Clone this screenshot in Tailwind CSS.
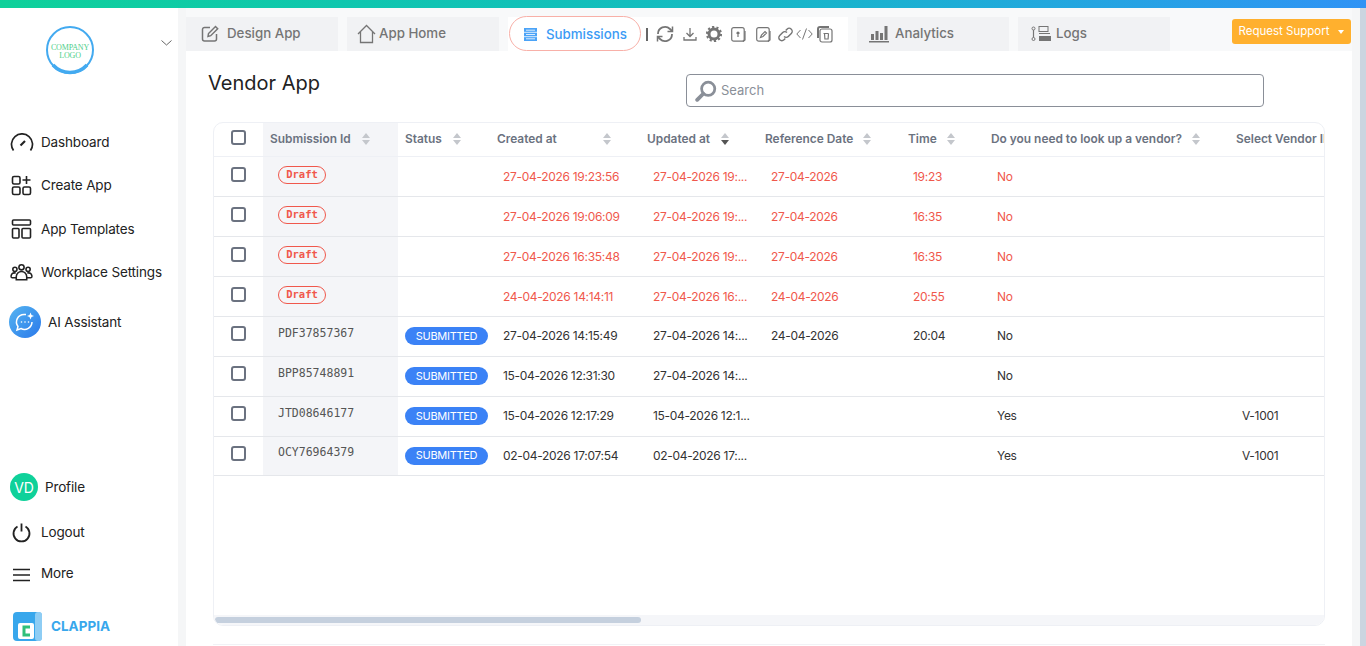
<!DOCTYPE html>
<html lang="en">
<head>
    <meta charset="UTF-8">
    <title>Vendor App</title>
    <script src="https://cdn.jsdelivr.net/npm/@tailwindcss/browser@4"></script>
</head>
<body class="h-[646px] w-[1366px] overflow-hidden bg-[#f5f6f7] font-['Inter',sans-serif] text-[#222]">
    <!-- Top gradient -->
    <div class="h-2 bg-gradient-to-r from-[#0fd19a] via-[#14bcc0] to-[#3093f5]"></div>

    <div class="flex h-[638px]">
        <!-- Sidebar -->
        <aside class="flex h-full w-[178px] shrink-0 flex-col bg-white text-[13.5px] tracking-[-0.15px]">
            <div class="relative h-[112px]">
                <svg class="absolute left-[45px] top-[17px]" width="50" height="50" viewBox="0 0 50 50">
                    <circle cx="25" cy="25" r="23" fill="none" stroke="#43aaf0" stroke-width="2"/>
                    <path d="M8 40a23 23 0 0 0 34 0" fill="none" stroke="#43aaf0" stroke-width="3.500"/>
                    <text x="25" y="25" text-anchor="middle" font-family="Liberation Serif" font-size="8" fill="#4fcf8c">COMPANY</text>
                    <text x="25" y="33" text-anchor="middle" font-family="Liberation Serif" font-size="8" fill="#4fcf8c">LOGO</text>
                </svg>
                <svg class="absolute left-[161px] top-[32px]" width="11" height="6" viewBox="0 0 11 6" fill="none" stroke="#666" stroke-width="1"><path d="M.5.5 5.500 5 10.500.5"/></svg>
            </div>
            <div class="flex h-[44px] items-center gap-[7px] pl-[10px]">
                <svg width="24" height="19" viewBox="0 0 24 19" fill="none" stroke="#222" stroke-width="1.700"><path d="M3.500 17.500a10.500 10.500 0 1 1 17 0"/><path d="M10.500 12.500 15 8" stroke-width="2.200"/></svg>
                <span>Dashboard</span>
            </div>
            <div class="flex h-[43px] items-center gap-[9px] pl-[11px]">
                <svg width="21" height="21" viewBox="0 0 21 21" fill="none" stroke="#222" stroke-width="1.600"><rect x="1.500" y="1.500" width="7.500" height="7.500" rx="1.500"/><rect x="1.500" y="12" width="7.500" height="7.500" rx="1.500"/><rect x="12" y="12" width="7.500" height="7.500" rx="1.500"/><path d="M15.500 1v8M11.500 5h8"/></svg>
                <span>Create App</span>
            </div>
            <div class="flex h-[44px] items-center gap-[9px] pl-[11px]">
                <svg width="21" height="20" viewBox="0 0 21 20" fill="none" stroke="#222" stroke-width="1.600"><rect x="1.500" y="1" width="18" height="5" rx="1"/><rect x="1.500" y="9.500" width="6.500" height="9.500" rx="1"/><rect x="11" y="9.500" width="8.500" height="9.500" rx="1"/></svg>
                <span>App Templates</span>
            </div>
            <div class="flex h-[43px] items-center gap-[8px] pl-[10px]">
                <svg width="23" height="19" viewBox="0 0 22 18" fill="none" stroke="#222" stroke-width="1.500"><circle cx="11" cy="4" r="2.500"/><circle cx="4.700" cy="6" r="2"/><circle cx="17.300" cy="6" r="2"/><path d="M6 16v-3a5 5 0 0 1 10 0v3zM6 14H2a1.200 1.200 0 0 1-1-1.500C1.500 10 3 9 5.500 9.500M16 14h4a1.200 1.200 0 0 0 1-1.500C20.500 10 19 9 16.500 9.500"/></svg>
                <span>Workplace Settings</span>
            </div>
            <div class="mt-[4px] flex h-[48px] items-center gap-[6px] pl-[9px]">
                <div class="flex h-8 w-8 items-center justify-center rounded-full bg-gradient-to-br from-[#56b4f0] to-[#2c78ea]">
                    <svg width="22" height="22" viewBox="0 0 22 22" fill="none" stroke="#fff" stroke-width="1.500"><path d="M12 3.500H10a7.500 7.500 0 0 0-6 12L3 19l4-1.500a7.500 7.500 0 0 0 11-6.500"/><path d="M16.500 1.500l1 2.500 2.500 1-2.500 1-1 2.500-1-2.500-2.500-1 2.500-1z" fill="#fff" stroke="none"/><circle cx="7.500" cy="11" r=".8" fill="#fff" stroke="none"/><circle cx="11" cy="11" r=".8" fill="#fff" stroke="none"/><circle cx="14.500" cy="11" r=".8" fill="#fff" stroke="none"/></svg>
                </div>
                <span class="ml-[1px]">AI Assistant</span>
            </div>
            <div class="mt-[118px] flex h-[46px] items-center gap-[7px] pl-[10px]">
                <div class="flex h-7 w-7 items-center justify-center rounded-full bg-[#0fd19a] text-[14px] text-white">VD</div>
                <span>Profile</span>
            </div>
            <div class="flex h-[45px] items-center gap-[9px] pl-[11px]">
                <svg width="21" height="20" viewBox="0 0 21 20" fill="none" stroke="#222" stroke-width="1.800"><path d="M6.500 3.500a8 8 0 1 0 8 0M10.500 .5v8"/></svg>
                <span>Logout</span>
            </div>
            <div class="flex h-[40px] items-center gap-[9px] pl-[11px]">
                <svg width="21" height="14" viewBox="0 0 21 14" fill="none" stroke="#222" stroke-width="1.500"><path d="M2 1.500h17M2 7h17M2 12.500h17"/></svg>
                <span class="-mt-[4px]">More</span>
            </div>
            <div class="mt-[17px] flex items-center gap-[9px] pl-[13px]">
                <svg width="29" height="29" viewBox="0 0 29 29"><rect width="29" height="29" rx="4" fill="#38a7ec"/><rect x="22" y="0" width="7" height="29" rx="3" fill="#8ecdf4"/><rect x="5" y="11" width="16" height="16" rx="2" fill="#fff"/><path d="M17 15h-6v8h6" fill="none" stroke="#2fc07a" stroke-width="3"/></svg>
                <span class="text-[13.500px] font-bold tracking-normal text-[#38a7ec]">CLAPPIA</span>
            </div>
        </aside>

        <!-- Main -->
        <main class="ml-2 flex h-full w-[1166px] shrink-0 flex-col">
            <!-- Tab bar -->
            <div class="flex h-[43px] items-end bg-[#f8f9fa] text-[13.300px] text-[#757575]">
                <div class="flex h-[34px] w-[152px] items-center gap-[8px] bg-[#f1f2f4] pl-[15px]">
                    <svg width="18" height="18" viewBox="0 0 18 18" fill="none" stroke="#757575" stroke-width="1.500"><path d="M15.500 9v5a2 2 0 0 1-2 2h-10a2 2 0 0 1-2-2V4.500a2 2 0 0 1 2-2H9"/><path d="M7 11.500l.5-3L14.500 1.500l2.200 2.200-7 7z"/></svg>
                    <span class="font-medium">Design App</span>
                </div>
                <div class="ml-[9px] flex h-[34px] w-[152px] items-center gap-[3px] bg-[#f1f2f4] pl-[10px]">
                    <svg width="19" height="20" viewBox="0 0 19 20" fill="none" stroke="#757575" stroke-width="1.300"><path d="M1 10 9.500 1.500 18 10M3.500 8v10.500h12V8"/></svg>
                    <span class="font-medium">App Home</span>
                </div>
                <div class="ml-[9px] flex h-[34px] w-[340px] items-center bg-white">
                    <div class="-mt-[2px] ml-[1px] flex h-[35px] w-[132px] items-center gap-[9px] rounded-full border border-[#f8b0a8] pl-[14px] pt-[3px] font-medium text-[#3b9bf5]">
                        <svg width="13" height="13" viewBox="0 0 13 13"><rect width="13" height="13" fill="#4ba3f7"/><path d="M0 4.300h13M0 8.700h13M2 2.200h9M2 6.500h9M2 10.800h9" stroke="#fff" stroke-width=".8"/></svg>
                        <span>Submissions</span>
                    </div>
                    <div class="ml-[5px] h-[13px] w-[1.500px] bg-[#666]"></div>
                    <svg class="ml-[8px]" width="18" height="18" viewBox="0 0 18 18" fill="none" stroke="#757575" stroke-width="1.800"><path d="M2 9a7 7 0 0 1 12-5l2 2M16 9a7 7 0 0 1-12 5l-2-2"/><path d="M16.500 1.500V6.500h-5M1.500 16.500V11.500h5" stroke-width="1.500"/></svg>
                    <svg class="ml-[9px]" width="14" height="14" viewBox="0 0 14 14" fill="none" stroke="#757575" stroke-width="1.300"><path d="M7 1v8M3.500 6 7 9.500 10.500 6M1 10v3h12v-3"/></svg>
                    <svg class="ml-[9px]" width="16" height="16" viewBox="0 0 16 16"><circle cx="8" cy="8" r="5" fill="none" stroke="#757575" stroke-width="3"/><circle cx="8" cy="8" r="7" fill="none" stroke="#757575" stroke-width="2.200" stroke-dasharray="2.200 2.200"/></svg>
                    <svg class="ml-[9px]" width="15" height="15" viewBox="0 0 15 15" fill="none" stroke="#757575" stroke-width="1.200"><rect x=".7" y=".7" width="12.500" height="13.500" rx="2"/><path d="M14 4v9l-2 1.500M7 10V5M5.500 6.500 7 5l1.500 1.500"/></svg>
                    <svg class="ml-[10px]" width="15" height="15" viewBox="0 0 15 15" fill="none" stroke="#757575" stroke-width="1.200"><rect x=".7" y=".7" width="12.500" height="13.500" rx="2"/><path d="M14 4v9l-2 1.500M4.500 10.500l1-2.500 3.500-3.500 1.500 1.500L7 9.500z"/></svg>
                    <svg class="ml-[7px]" width="15" height="15" viewBox="0 0 15 15" fill="none" stroke="#757575" stroke-width="1.400"><path d="M6 9.500a3 3 0 0 0 4.300 0l3-3a3 3 0 0 0-4.300-4.300L7.700 3.500"/><path d="M9 5.500a3 3 0 0 0-4.300 0l-3 3a3 3 0 0 0 4.300 4.300l1.300-1.300"/></svg>
                    <svg class="ml-[3px]" width="17" height="12" viewBox="0 0 17 12" fill="none" stroke="#757575" stroke-width="1"><path d="M4.500 2 .8 6l3.700 4M12.500 2l3.700 4-3.700 4M10.500.5l-4 11"/></svg>
                    <svg class="ml-[4px]" width="16" height="17" viewBox="0 0 16 17" fill="none" stroke="#757575" stroke-width="1.200"><rect x="3" y="3" width="12" height="13" rx="2"/><path d="M1 12V3a2 2 0 0 1 2-2h9" stroke-width="2"/><path d="M6.500 7.500h5M7.500 7.500l.4 5.500h3.200l.4-5.500"/></svg>
                </div>
                <div class="ml-[9px] flex h-[34px] w-[152px] items-center gap-[6px] bg-[#f1f2f4] pl-[12px]">
                    <svg width="20" height="18" viewBox="0 0 20 18" fill="#757575"><rect x="2" y="9" width="3" height="6"/><rect x="6.500" y="6" width="3" height="9"/><rect x="11" y="8" width="3" height="7"/><rect x="15.500" y="1" width="3" height="14"/><rect y="16" width="20" height="1.500"/></svg>
                    <span class="font-medium">Analytics</span>
                </div>
                <div class="ml-[9px] flex h-[34px] w-[152px] items-center gap-[5px] bg-[#f1f2f4] pl-[13px]">
                    <svg width="20" height="16" viewBox="0 0 20 16"><circle cx="2.500" cy="2.500" r="1.500" fill="none" stroke="#757575"/><circle cx="2.500" cy="13" r="1.500" fill="none" stroke="#757575"/><path d="M2.500 4v7.500" stroke="#757575" stroke-width="1.200"/><rect x="8" y=".5" width="9" height="5" fill="none" stroke="#757575"/><path d="M8 7.500h11" stroke="#757575"/><rect x="8" y="10" width="12" height="5" fill="#757575"/></svg>
                    <span class="font-medium">Logs</span>
                </div>
                <div class="mb-[7px] ml-[62px] flex h-[25px] w-[119px] items-center justify-center gap-[9px] rounded-[3px] bg-[#ffb02e] text-[11.500px] text-white">
                    <span>Request Support</span>
                    <span class="h-0 w-0 border-x-[3.500px] border-t-[4px] border-x-transparent border-t-white"></span>
                </div>
            </div>

            <!-- Content panel -->
            <div class="flex h-[595px] w-[1166px] flex-col bg-white">
                <div class="flex h-[71px] items-start">
                    <h1 class="ml-[22px] mt-[18px] w-[111px] whitespace-nowrap text-[20px] leading-[28px] text-[#222]">Vendor App</h1>
                    <div class="ml-[367px] mt-[23px] flex h-[33px] w-[578px] items-center gap-[4px] rounded-[4px] border border-[#8a8f98] pl-[8px] text-[13px] text-[#8a8f98]">
                        <svg width="22" height="22" viewBox="0 0 20 20" fill="none" stroke="#8a8f98"><circle cx="12" cy="8" r="6" stroke-width="2.500"/><path d="M7.500 12.500 2 18" stroke-width="3.500" stroke-linecap="round"/></svg>
                        <span class="pt-[1px]">Search</span>
                    </div>
                </div>

                <!-- Table card -->
                <div class="ml-[27px] flex h-[504px] w-[1112px] flex-col overflow-hidden rounded-[10px] border border-[#eef0f5]">
                    <div class="flex-1 overflow-hidden">
                        <table class="w-[1299px] table-fixed border-collapse whitespace-nowrap text-left text-[12px] tracking-[-0.3px] text-[#333]">
                            <colgroup>
                                <col class="w-[49px]"><col class="w-[135px]"><col class="w-[92px]"><col class="w-[150px]"><col class="w-[118px]"><col class="w-[143px]"><col class="w-[83px]"><col class="w-[245px]"><col class="w-[284px]">
                            </colgroup>
                            <thead class="text-[11.900px] font-semibold tracking-normal text-[#6b7280]">
                                <tr class="h-[33px] border-b border-[#eef0f5]">
                                    <th><div class="mx-auto mb-[4px] h-[15px] w-[15px] rounded-[3px] border-2 border-[#6b7280]"></div></th>
                                    <th class="bg-[#f4f5f8] pl-[7px] font-semibold"><div class="flex w-[100px] items-center justify-between">Submission Id <svg width="8" height="12" viewBox="0 0 8 12" fill="#c4c7cc"><path d="M4 0l4 5H0zM4 12l4-5H0z"/></svg></div></th>
                                    <th class="pl-[7px] font-semibold"><div class="flex w-[56px] items-center justify-between">Status <svg width="8" height="12" viewBox="0 0 8 12" fill="#c4c7cc"><path d="M4 0l4 5H0zM4 12l4-5H0z"/></svg></div></th>
                                    <th class="pl-[7px] font-semibold"><div class="flex w-[114px] items-center justify-between">Created at <svg width="8" height="12" viewBox="0 0 8 12" fill="#c4c7cc"><path d="M4 0l4 5H0zM4 12l4-5H0z"/></svg></div></th>
                                    <th class="pl-[7px] font-semibold"><div class="flex w-[82px] items-center justify-between">Updated at <svg width="8" height="12" viewBox="0 0 8 12" fill="#c4c7cc"><path d="M4 0l4 5H0z"/><path d="M4 12l4-5H0z" fill="#555"/></svg></div></th>
                                    <th class="pl-[7px] font-semibold"><div class="flex w-[106px] items-center justify-between">Reference Date <svg width="8" height="12" viewBox="0 0 8 12" fill="#c4c7cc"><path d="M4 0l4 5H0zM4 12l4-5H0z"/></svg></div></th>
                                    <th class="pl-[7px] font-semibold"><div class="flex w-[47px] items-center justify-between">Time <svg width="8" height="12" viewBox="0 0 8 12" fill="#c4c7cc"><path d="M4 0l4 5H0zM4 12l4-5H0z"/></svg></div></th>
                                    <th class="pl-[7px] font-semibold"><div class="flex w-[209px] items-center justify-between">Do you need to look up a vendor? <svg width="8" height="12" viewBox="0 0 8 12" fill="#c4c7cc"><path d="M4 0l4 5H0zM4 12l4-5H0z"/></svg></div></th>
                                    <th class="pl-[7px] font-semibold">Select Vendor ID</th>
                                </tr>
                            </thead>
                            <tbody>
                                <tr class="h-[40px] border-b border-[#e5e7eb] text-[#f0584c]">
                                    <td><div class="mx-auto mb-[3px] h-[15px] w-[15px] rounded-[3px] border-2 border-[#6b7280]"></div></td>
                                    <td class="bg-[#f4f5f8] pl-[15px]"><span class="mb-[3px] flex h-[18px] w-[48px] items-center justify-center rounded-full border border-[#f0584c] font-['DejaVu_Sans_Mono',monospace] text-[10.500px] font-bold tracking-normal">Draft</span></td>
                                    <td></td>
                                    <td class="pl-[13px] pt-[2px]">27-04-2026 19:23:56</td>
                                    <td class="pl-[13px] pt-[2px]">27-04-2026 19:...</td>
                                    <td class="pl-[13px] pt-[2px]">27-04-2026</td>
                                    <td class="pl-[12px] pt-[2px]">19:23</td>
                                    <td class="pl-[13px] pt-[2px]">No</td>
                                    <td></td>
                                </tr>
                                <tr class="h-[40px] border-b border-[#e5e7eb] text-[#f0584c]">
                                    <td><div class="mx-auto mb-[3px] h-[15px] w-[15px] rounded-[3px] border-2 border-[#6b7280]"></div></td>
                                    <td class="bg-[#f4f5f8] pl-[15px]"><span class="mb-[3px] flex h-[18px] w-[48px] items-center justify-center rounded-full border border-[#f0584c] font-['DejaVu_Sans_Mono',monospace] text-[10.500px] font-bold tracking-normal">Draft</span></td>
                                    <td></td>
                                    <td class="pl-[13px] pt-[2px]">27-04-2026 19:06:09</td>
                                    <td class="pl-[13px] pt-[2px]">27-04-2026 19:...</td>
                                    <td class="pl-[13px] pt-[2px]">27-04-2026</td>
                                    <td class="pl-[12px] pt-[2px]">16:35</td>
                                    <td class="pl-[13px] pt-[2px]">No</td>
                                    <td></td>
                                </tr>
                                <tr class="h-[40px] border-b border-[#e5e7eb] text-[#f0584c]">
                                    <td><div class="mx-auto mb-[3px] h-[15px] w-[15px] rounded-[3px] border-2 border-[#6b7280]"></div></td>
                                    <td class="bg-[#f4f5f8] pl-[15px]"><span class="mb-[3px] flex h-[18px] w-[48px] items-center justify-center rounded-full border border-[#f0584c] font-['DejaVu_Sans_Mono',monospace] text-[10.500px] font-bold tracking-normal">Draft</span></td>
                                    <td></td>
                                    <td class="pl-[13px] pt-[2px]">27-04-2026 16:35:48</td>
                                    <td class="pl-[13px] pt-[2px]">27-04-2026 19:...</td>
                                    <td class="pl-[13px] pt-[2px]">27-04-2026</td>
                                    <td class="pl-[12px] pt-[2px]">16:35</td>
                                    <td class="pl-[13px] pt-[2px]">No</td>
                                    <td></td>
                                </tr>
                                <tr class="h-[40px] border-b border-[#e5e7eb] text-[#f0584c]">
                                    <td><div class="mx-auto mb-[3px] h-[15px] w-[15px] rounded-[3px] border-2 border-[#6b7280]"></div></td>
                                    <td class="bg-[#f4f5f8] pl-[15px]"><span class="mb-[3px] flex h-[18px] w-[48px] items-center justify-center rounded-full border border-[#f0584c] font-['DejaVu_Sans_Mono',monospace] text-[10.500px] font-bold tracking-normal">Draft</span></td>
                                    <td></td>
                                    <td class="pl-[13px] pt-[2px]">24-04-2026 14:14:11</td>
                                    <td class="pl-[13px] pt-[2px]">27-04-2026 16:...</td>
                                    <td class="pl-[13px] pt-[2px]">24-04-2026</td>
                                    <td class="pl-[12px] pt-[2px]">20:55</td>
                                    <td class="pl-[13px] pt-[2px]">No</td>
                                    <td></td>
                                </tr>
                                <tr class="h-[40px] border-b border-[#e5e7eb]">
                                    <td><div class="mx-auto mb-[5px] h-[15px] w-[15px] rounded-[3px] border-2 border-[#6b7280]"></div></td>
                                    <td class="bg-[#f4f5f8] pl-[15px] font-['DejaVu_Sans_Mono',monospace] text-[11.500px] tracking-normal text-[#555]"><span class="mb-[5px] block">PDF37857367</span></td>
                                    <td class="pl-[7px]"><span class="flex h-[18px] w-[83px] items-center justify-center rounded-full bg-[#3b82f6] text-[11px] text-white">SUBMITTED</span></td>
                                    <td class="pl-[13px]">27-04-2026 14:15:49</td>
                                    <td class="pl-[13px]">27-04-2026 14:...</td>
                                    <td class="pl-[13px]">24-04-2026</td>
                                    <td class="pl-[12px]">20:04</td>
                                    <td class="pl-[13px]">No</td>
                                    <td></td>
                                </tr>
                                <tr class="h-[40px] border-b border-[#e5e7eb]">
                                    <td><div class="mx-auto mb-[5px] h-[15px] w-[15px] rounded-[3px] border-2 border-[#6b7280]"></div></td>
                                    <td class="bg-[#f4f5f8] pl-[15px] font-['DejaVu_Sans_Mono',monospace] text-[11.500px] tracking-normal text-[#555]"><span class="mb-[5px] block">BPP85748891</span></td>
                                    <td class="pl-[7px]"><span class="flex h-[18px] w-[83px] items-center justify-center rounded-full bg-[#3b82f6] text-[11px] text-white">SUBMITTED</span></td>
                                    <td class="pl-[13px]">15-04-2026 12:31:30</td>
                                    <td class="pl-[13px]">27-04-2026 14:...</td>
                                    <td></td>
                                    <td></td>
                                    <td class="pl-[13px]">No</td>
                                    <td></td>
                                </tr>
                                <tr class="h-[40px] border-b border-[#e5e7eb]">
                                    <td><div class="mx-auto mb-[5px] h-[15px] w-[15px] rounded-[3px] border-2 border-[#6b7280]"></div></td>
                                    <td class="bg-[#f4f5f8] pl-[15px] font-['DejaVu_Sans_Mono',monospace] text-[11.500px] tracking-normal text-[#555]"><span class="mb-[5px] block">JTD08646177</span></td>
                                    <td class="pl-[7px]"><span class="flex h-[18px] w-[83px] items-center justify-center rounded-full bg-[#3b82f6] text-[11px] text-white">SUBMITTED</span></td>
                                    <td class="pl-[13px]">15-04-2026 12:17:29</td>
                                    <td class="pl-[13px]">15-04-2026 12:1...</td>
                                    <td></td>
                                    <td></td>
                                    <td class="pl-[13px]">Yes</td>
                                    <td class="pl-[13px]">V-1001</td>
                                </tr>
                                <tr class="h-[39px] border-b border-[#e5e7eb]">
                                    <td><div class="mx-auto mb-[5px] h-[15px] w-[15px] rounded-[3px] border-2 border-[#6b7280]"></div></td>
                                    <td class="bg-[#f4f5f8] pl-[15px] font-['DejaVu_Sans_Mono',monospace] text-[11.500px] tracking-normal text-[#555]"><span class="mb-[5px] block">OCY76964379</span></td>
                                    <td class="pl-[7px]"><span class="flex h-[18px] w-[83px] items-center justify-center rounded-full bg-[#3b82f6] text-[11px] text-white">SUBMITTED</span></td>
                                    <td class="pl-[13px]">02-04-2026 17:07:54</td>
                                    <td class="pl-[13px]">02-04-2026 17:...</td>
                                    <td></td>
                                    <td></td>
                                    <td class="pl-[13px]">Yes</td>
                                    <td class="pl-[13px]">V-1001</td>
                                </tr>
                            </tbody>
                        </table>
                    </div>
                    <!-- Horizontal scrollbar -->
                    <div class="flex h-[10px] items-center bg-[#f5f6f9] pl-[1px]">
                        <div class="h-[6px] w-[426px] rounded-full bg-[#c5d0de]"></div>
                    </div>
                </div>
                <div class="ml-[27px] mt-[18px] h-px w-[1112px] bg-[#f1f2f6]"></div>
            </div>
        </main>

        <!-- Page scrollbar -->
        <div class="ml-2 h-full w-[6px] bg-[#cbd5e0]"></div>
    </div>
</body>
</html>
